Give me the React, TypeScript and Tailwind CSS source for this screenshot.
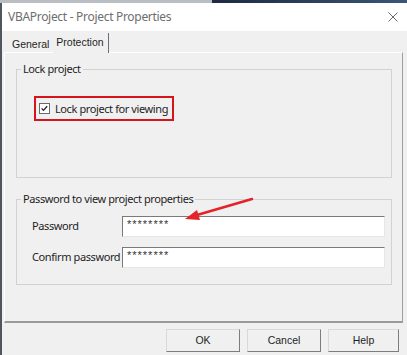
export default function App() {
  return (
    <div className="relative w-[407px] h-[355px] overflow-hidden bg-[#f0f0f0] flex flex-col text-[#1e1e1e]">
      <div className="flex h-[3px] shrink-0">
        <div className="w-[212px] bg-[#b9bdc4]" />
        <div className="flex-1 bg-gradient-to-r from-[#1d2a40] to-[#3b5678]" />
      </div>
      <div className="flex flex-1 min-h-0">
        <div className="w-[2px] bg-[#50555e] shrink-0" />
        <div className="flex-1 flex flex-col min-w-0">
          {/* title bar */}
          <div className="h-[28px] bg-white flex items-center justify-between pl-[6px] pr-[9px] shrink-0">
            <span className="font-['Noto_Sans',sans-serif] text-[12px] tracking-[-0.3px] text-[#6e6e6e]">VBAProject - Project Properties</span>
            <svg width="10" height="10" viewBox="0 0 10 10">
              <path d="M0.5 0.5 L9.5 9.5 M9.5 0.5 L0.5 9.5" stroke="#6a6a6a" strokeWidth="1" />
            </svg>
          </div>
          {/* tabs */}
          <div className="h-[21px] flex items-end pl-[3px] font-['Liberation_Sans',Arial,sans-serif] text-[10.5px] shrink-0">
            <div className="h-[17px] pl-[7px] pr-[4px] flex items-center pt-[3px]">General</div>
            <div className="h-[20px] pl-[3px] pr-[4px] flex items-center border-r border-[#6f6f6f] mb-[-1px] relative z-10 bg-[#f0f0f0]">Protection</div>
          </div>
          {/* panel */}
          <div className="ml-[2px] mr-[4px] h-[271px] border-t border-l border-white border-r border-r-[#a0a0a0] border-b-2 border-b-[#9a9a9a] pl-[11px] pr-[10px] pt-[16px] flex flex-col shrink-0 font-['Noto_Sans',sans-serif] text-[11px] tracking-[-0.4px]">
            {/* Lock project group */}
            <div className="relative h-[109px] border border-[#d2d2d2] pl-[17px] pt-[26px]">
              <span className="absolute left-[4px] top-[-10px] px-[2px] bg-[#f0f0f0] leading-[18px]">Lock project</span>
              <div className="w-[140px] h-[25px] border-2 border-[#d5141c] flex items-center pl-[3px] gap-[5px]">
                <svg width="11" height="11" viewBox="0 0 11 11" className="shrink-0">
                  <rect x="0.5" y="0.5" width="10" height="10" fill="#ffffff" stroke="#6a6a6a" />
                  <path d="M2.6 5.4 L4.4 7.4 L8.2 3.2" stroke="#222" strokeWidth="1.3" fill="none" />
                </svg>
                <span className="leading-none whitespace-nowrap">Lock project for viewing</span>
              </div>
            </div>
            {/* Password group */}
            <div className="relative mt-[21px] h-[86px] border border-[#d2d2d2] pl-[15px] pr-[6px] pt-[16px] flex flex-col gap-[10px]">
              <span className="absolute left-[4px] top-[-10px] px-[2px] bg-[#f0f0f0] leading-[18px]">Password to view project properties</span>
              <div className="flex items-center h-[21px]">
                <span className="w-[90px] shrink-0">Password</span>
                <div className="flex-1 h-[21px] bg-white border-t border-l border-[#7a7a7a] border-r border-b border-r-[#e6e6e6] border-b-[#e6e6e6] pl-[4px] pt-[1px] font-['Liberation_Sans',Arial,sans-serif] text-[11px] leading-[12px] tracking-[1px] text-[#333]">********</div>
              </div>
              <div className="flex items-center h-[21px]">
                <span className="w-[90px] shrink-0 whitespace-nowrap">Confirm password</span>
                <div className="flex-1 h-[21px] bg-white border-t border-l border-[#7a7a7a] border-r border-b border-r-[#e6e6e6] border-b-[#e6e6e6] pl-[4px] pt-[1px] font-['Liberation_Sans',Arial,sans-serif] text-[11px] leading-[12px] tracking-[1px] text-[#333]">********</div>
              </div>
            </div>
          </div>
          {/* buttons */}
          <div className="flex gap-[7px] pl-[164px] mt-[6px] font-['Liberation_Sans',Arial,sans-serif] text-[10.5px]">
            <button className="w-[74px] h-[23px] bg-[#f0f0f0] border border-t-[#d9d9d9] border-l-[#d9d9d9] border-r-[#7d7d7d] border-b-[#7d7d7d] flex items-center justify-center">OK</button>
            <button className="w-[74px] h-[23px] bg-[#f0f0f0] border border-t-[#d9d9d9] border-l-[#d9d9d9] border-r-[#7d7d7d] border-b-[#7d7d7d] flex items-center justify-center">Cancel</button>
            <button className="w-[71px] h-[23px] bg-[#f0f0f0] border border-t-[#d9d9d9] border-l-[#d9d9d9] border-r-[#7d7d7d] border-b-[#7d7d7d] flex items-center justify-center">Help</button>
          </div>
        </div>
      </div>
      {/* red annotation arrow */}
      <svg className="absolute left-0 top-0 pointer-events-none" width="407" height="355" viewBox="0 0 407 355">
        <line x1="252" y1="199" x2="197" y2="215" stroke="#e3222a" strokeWidth="2.5" strokeLinecap="round" />
        <polygon points="185,219 197,210 200,220" fill="#e3222a" />
      </svg>
    </div>
  );
}
